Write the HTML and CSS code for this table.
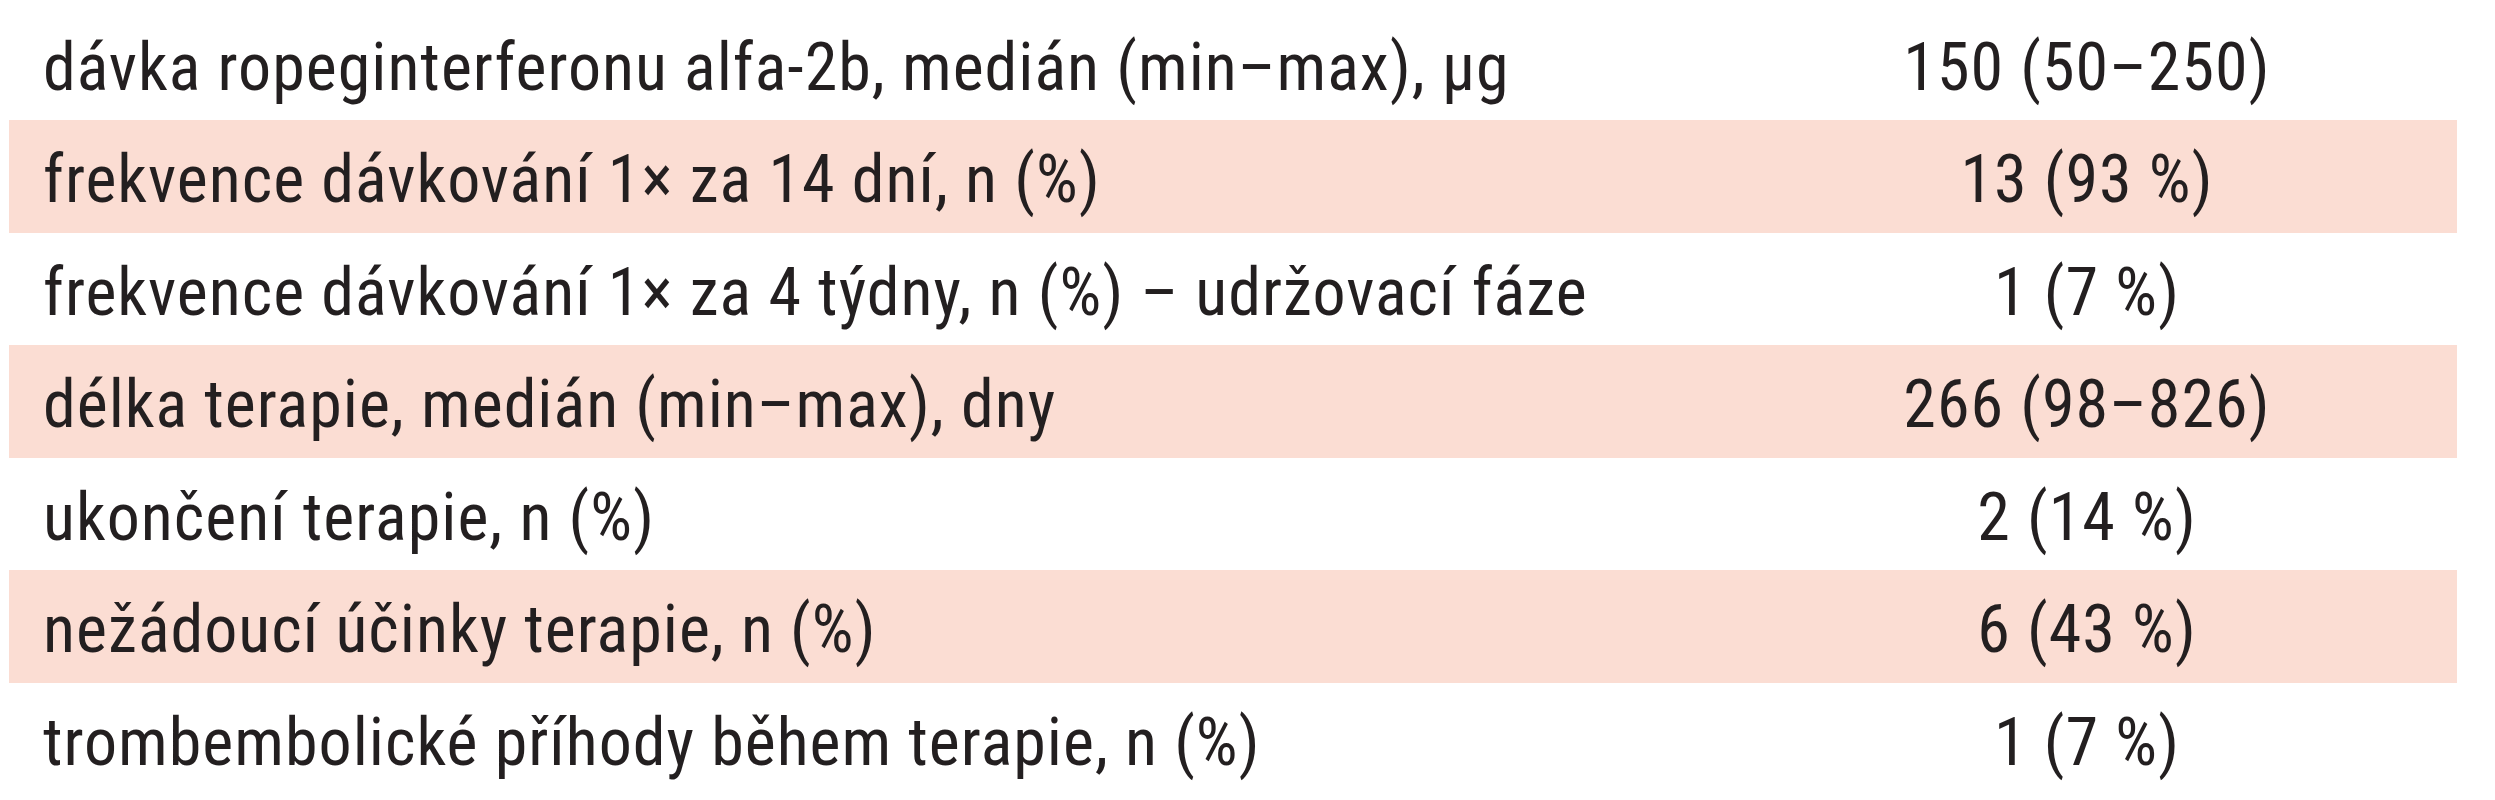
FILE: index.html
```html
<!DOCTYPE html>
<html lang="cs">
<head>
<meta charset="utf-8">
<title>Tabulka</title>
<link rel="stylesheet" href="styles.css">
</head>
<body>
<table class="data">
  <tbody>
    <tr class="row"><td class="label">dávka ropeginterferonu alfa-2b, medián (min–max), µg</td><td class="value">150 (50–250)</td></tr>
    <tr class="row shaded"><td class="label">frekvence dávkování 1× za 14 dní, n (%)</td><td class="value">13 (93 %)</td></tr>
    <tr class="row"><td class="label">frekvence dávkování 1× za 4 týdny, n (%) – udržovací fáze</td><td class="value">1 (7 %)</td></tr>
    <tr class="row shaded"><td class="label">délka terapie, medián (min–max), dny</td><td class="value">266 (98–826)</td></tr>
    <tr class="row"><td class="label">ukončení terapie, n (%)</td><td class="value">2 (14 %)</td></tr>
    <tr class="row shaded"><td class="label">nežádoucí účinky terapie, n (%)</td><td class="value">6 (43 %)</td></tr>
    <tr class="row"><td class="label">trombembolické příhody během terapie, n (%)</td><td class="value">1 (7 %)</td></tr>
  </tbody>
</table>
</body>
</html>
```
FILE: styles.css
```css
html, body {
  margin: 0;
  padding: 0;
  background: #ffffff;
}
.data {
  margin: 7.5px 0 0 9px;
  width: 2448px;
  border-collapse: collapse;
  border-spacing: 0;
  table-layout: fixed;
  font-family: "Roboto", "Liberation Sans", sans-serif;
  font-stretch: condensed;
  font-size: 66px;
  letter-spacing: 1px;
  color: #231f20;
}
.row td {
  padding: 8px 0 0 0;
  line-height: 104.5px;
  height: 104.5px;
  white-space: nowrap;
  vertical-align: top;
}
.shaded td {
  background: #fbddd3;
}
.label {
  width: 1674px;
  padding-left: 34px !important;
  text-align: left;
}
.value {
  width: 740px;
  text-align: center;
}
```
